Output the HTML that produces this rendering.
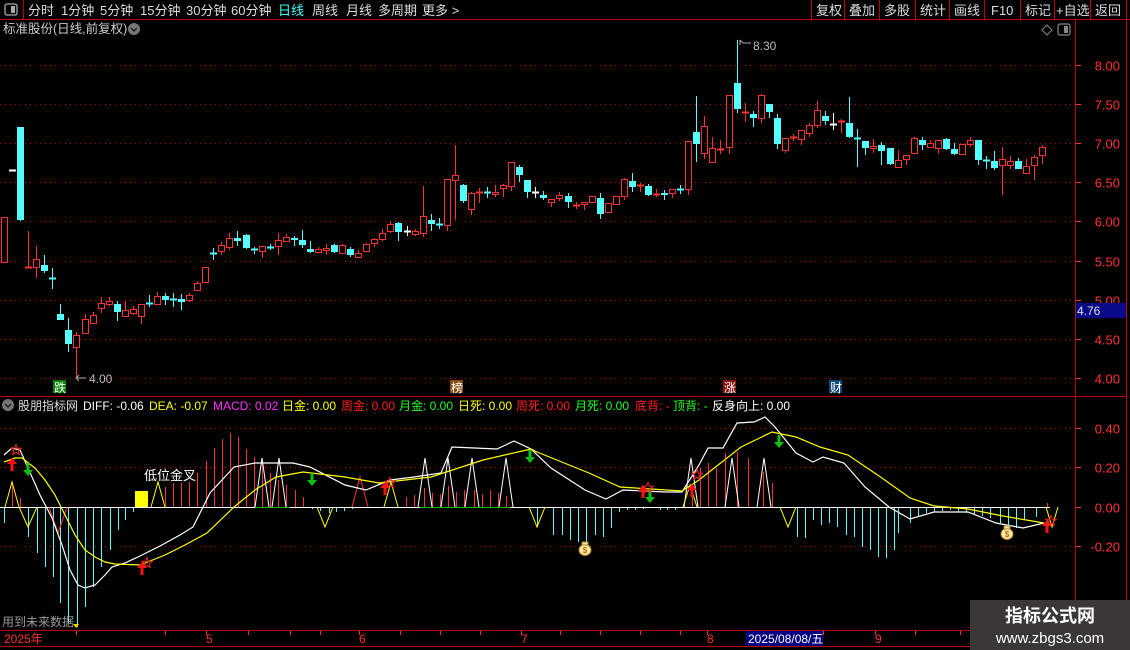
<!DOCTYPE html>
<html><head><meta charset="utf-8">
<style>
html,body{margin:0;padding:0;background:#000;}
body{width:1130px;height:650px;overflow:hidden;position:relative;font-family:"Liberation Sans","Noto Sans CJK SC",sans-serif;}
svg text{font-family:"Liberation Sans","Noto Sans CJK SC",sans-serif;}
</style></head>
<body>
<svg id="s" width="1130" height="650" viewBox="0 0 1130 650" xmlns="http://www.w3.org/2000/svg" style="position:absolute;left:0;top:0">
<rect width="1130" height="650" fill="#000"/>
<line x1="0" y1="19.5" x2="1130" y2="19.5" stroke="#c00000"/>
<line x1="23.5" y1="0" x2="23.5" y2="19" stroke="#c00000"/>
<rect x="5" y="4" width="12" height="11" rx="2" fill="none" stroke="#aaa" stroke-width="1.3"/>
<rect x="11" y="6" width="4" height="7" fill="#aaa"/>
<g font-size="13" fill="#ddd">
<text x="28" y="15">分时</text><text x="61" y="15">1分钟</text><text x="100" y="15">5分钟</text>
<text x="140" y="15">15分钟</text><text x="186" y="15">30分钟</text><text x="231" y="15">60分钟</text>
<text x="278" y="15" fill="#40ffff">日线</text><text x="312" y="15">周线</text><text x="346" y="15">月线</text>
<text x="378" y="15">多周期</text><text x="422" y="15">更多 &gt;</text>
<text x="816" y="15">复权</text><text x="849" y="15">叠加</text><text x="884" y="15">多股</text>
<text x="920" y="15">统计</text><text x="954" y="15">画线</text><text x="991" y="15">F10</text>
<text x="1025" y="15">标记</text><text x="1056" y="15">+自选</text><text x="1095" y="15">返回</text>
</g>
<g stroke="#c00000">
<line x1="811.5" y1="0" x2="811.5" y2="19"/><line x1="844.5" y1="0" x2="844.5" y2="19"/><line x1="879.5" y1="0" x2="879.5" y2="19"/>
<line x1="915.5" y1="0" x2="915.5" y2="19"/><line x1="949.5" y1="0" x2="949.5" y2="19"/><line x1="984.5" y1="0" x2="984.5" y2="19"/>
<line x1="1020.5" y1="0" x2="1020.5" y2="19"/><line x1="1054.5" y1="0" x2="1054.5" y2="19"/><line x1="1090.5" y1="0" x2="1090.5" y2="19"/>
<line x1="1126.5" y1="0" x2="1126.5" y2="650"/>
<line x1="1075.5" y1="20" x2="1075.5" y2="630"/>
<line x1="0" y1="396.5" x2="1126" y2="396.5"/>
<line x1="0" y1="630.5" x2="1130" y2="630.5"/>
<line x1="0" y1="646.5" x2="1130" y2="646.5"/>
</g>
<text x="3" y="33" font-size="12.5" fill="#ccc">标准股份(日线,前复权)</text>
<circle cx="134" cy="29" r="6" fill="#777"/><path d="M131 28 l3 3 l3 -3" stroke="#222" stroke-width="1.5" fill="none"/>
<path d="M1047 25 l5 5 l-5 5 l-5 -5z" fill="none" stroke="#888"/>
<rect x="1058" y="24" width="12" height="11" rx="2" fill="none" stroke="#888" stroke-width="1.2"/><rect x="1064" y="26" width="4" height="7" fill="#888"/>
<g id="grid" stroke="#b00000" stroke-dasharray="1,4"></g>
<g id="axis" font-size="13" fill="#ff3030" text-anchor="end"></g>
<rect x="1076" y="303" width="50" height="15" fill="#0a0a88"/>
<text x="1077" y="315" font-size="12" fill="#ddd">4.76</text>
<g id="candles" shape-rendering="crispEdges"></g>
<path d="M76 378 h10 M76 378 l3 -3 M76 378 l3 3" stroke="#aaa" fill="none"/>
<text x="89" y="383" font-size="12" fill="#bbb">4.00</text>
<path d="M740 40 v5 M740 40 l3 3 h8" stroke="#aaa" fill="none"/>
<text x="753" y="50" font-size="12" fill="#bbb">8.30</text>
<rect x="53" y="380" width="13" height="13" fill="#008000"/><text x="54" y="392" font-size="12" fill="#fff">跌</text>
<rect x="450" y="380" width="13" height="13" fill="#8a4a10"/><text x="451" y="392" font-size="12" fill="#fff">榜</text>
<rect x="723" y="380" width="13" height="13" fill="#8a1010"/><text x="724" y="392" font-size="12" fill="#fff">涨</text>
<rect x="829" y="380" width="13" height="13" fill="#104878"/><text x="830" y="392" font-size="12" fill="#fff">财</text>
<circle cx="8" cy="405" r="6" fill="#777"/><path d="M5 404 l3 3 l3 -3" stroke="#222" stroke-width="1.5" fill="none"/>
<g font-size="12">
<text x="18" y="410" fill="#ddd">股朋指标网</text>
<text x="83" y="410" fill="#fff">DIFF: -0.06</text>
<text x="149" y="410" fill="#ffff00">DEA: -0.07</text>
<text x="213" y="410" fill="#ff30ff">MACD: 0.02</text>
<text x="282" y="410" fill="#ffff00">日金: 0.00</text>
<text x="341" y="410" fill="#ff2020">周金: 0.00</text>
<text x="399" y="410" fill="#20ff20">月金: 0.00</text>
<text x="458" y="410" fill="#ffff00">日死: 0.00</text>
<text x="516" y="410" fill="#ff2020">周死: 0.00</text>
<text x="575" y="410" fill="#20ff20">月死: 0.00</text>
<text x="635" y="410" fill="#ff2020">底背: -</text>
<text x="673" y="410" fill="#20ff20">顶背: -</text>
<text x="712" y="410" fill="#fff">反身向上: 0.00</text>
</g>
<g id="ind"></g>
<rect x="135" y="491" width="13" height="16" fill="#ffff00"/>
<text x="144" y="480" font-size="13" fill="#fff">低位金叉</text>
<text x="2" y="626" font-size="12" fill="#999">用到未来数据</text>
<path d="M73 624 h6 l-3 4z" fill="#ffd000"/>
<g font-size="12" fill="#ff3030">
<text x="4" y="643">2025年</text><text x="206" y="643">5</text><text x="359" y="643">6</text>
<text x="521" y="643">7</text><text x="707" y="643">8</text><text x="875" y="643">9</text>
</g>
<g stroke="#ff3030" id="ticks"></g>
<rect x="746" y="631" width="77" height="15" fill="#000080"/>
<text x="748" y="643" font-size="12" fill="#fff">2025/08/08/五</text>
<rect x="970" y="600" width="160" height="50" fill="#3b3737"/>
<text x="1050" y="622" font-size="18" font-weight="bold" fill="#fff" text-anchor="middle">指标公式网</text>
<text x="1050" y="643" font-size="15" fill="#fff" text-anchor="middle">www.zbgs3.com</text>
</svg>
<script>
var NS="http://www.w3.org/2000/svg";
function el(p,t,a){var e=document.createElementNS(NS,t);for(var k in a)e.setAttribute(k,a[k]);p.appendChild(e);return e;}
var g=document.getElementById('grid'),ax=document.getElementById('axis');
var prices=["8.00","7.50","7.00","6.50","6.00","5.50","5.00","4.50","4.00"];
for(var i=0;i<9;i++){var y=Math.round(65+i*39.1)+0.5;el(g,'line',{x1:0,y1:y,x2:1075,y2:y});
 var t=el(ax,'text',{x:1120,y:y+5});t.textContent=prices[i];
 el(document.getElementById('s'),'line',{x1:1075,y1:y,x2:1081,y2:y,stroke:'#ff3030'});}
var iv=[[428.5,"0.40"],[467.5,"0.20"],[507.5,"0.00"],[546.5,"-0.20"]];
iv.forEach(function(v){if(v[0]!=507.5)el(g,'line',{x1:0,y1:v[0],x2:1075,y2:v[0]});var t=el(ax,'text',{x:1120,y:v[0]+5});t.textContent=v[1];
 el(document.getElementById('s'),'line',{x1:1075,y1:v[0],x2:1081,y2:v[0],stroke:'#ff3030'});});
var tk=document.getElementById('ticks');
[76,165,206,248,290,320,359,400,440,480,521,560,600,640,680,707,746,823,875,915,960,1000,1040].forEach(function(x){el(tk,'line',{x1:x+.5,y1:631,x2:x+.5,y2:635});});
var C=[[217,262,217,262,'r'],[170,170,170,170,'w'],[127,220,127,221,'c'],[267,267,231,267,'r'],[259,267,246,278,'r'],[265,271,255,273,'c'],[278,278,268,289,'c'],[314,320,304,320,'c'],[330,344,318,352,'c'],[335,347,332,377,'r'],[319,333,314,333,'r'],[315,323,312,323,'r'],[303,308,297,313,'r'],[301,304,297,306,'r'],[304,312,301,321,'c'],[310,316,301,316,'r'],[309,313,306,315,'r'],[304,316,304,324,'r'],[303,303,295,307,'c'],[296,304,292,304,'r'],[296,300,293,305,'c'],[299,299,293,307,'c'],[299,302,294,310,'c'],[295,300,293,302,'r'],[283,290,281,291,'r'],[267,282,267,282,'r'],[253,253,248,260,'c'],[245,251,242,255,'r'],[238,247,233,250,'r'],[238,241,231,246,'c'],[235,248,234,249,'c'],[249,249,247,254,'c'],[246,251,246,258,'r'],[247,247,244,250,'c'],[240,246,233,255,'r'],[237,241,234,242,'r'],[238,240,236,246,'c'],[240,245,230,248,'c'],[249,252,241,253,'c'],[249,252,247,253,'r'],[248,250,244,255,'r'],[245,252,244,253,'c'],[245,253,244,254,'r'],[249,255,247,257,'c'],[253,257,250,258,'r'],[244,251,243,252,'r'],[239,243,238,247,'r'],[233,239,229,241,'r'],[224,231,221,233,'r'],[223,232,222,241,'c'],[231,231,226,236,'w'],[231,234,229,236,'r'],[216,233,186,237,'r'],[220,224,214,231,'c'],[224,224,218,229,'c'],[179,225,179,231,'r'],[175,180,145,220,'r'],[185,201,184,203,'c'],[193,209,192,215,'r'],[192,192,188,203,'r'],[192,192,187,198,'c'],[192,194,185,197,'r'],[185,188,184,197,'r'],[162,186,162,191,'r'],[167,175,165,182,'c'],[180,192,180,198,'c'],[192,192,187,198,'w'],[195,198,191,200,'c'],[199,202,199,207,'r'],[195,198,192,201,'r'],[196,202,193,208,'c'],[205,205,202,209,'r'],[202,204,202,210,'r'],[196,202,196,203,'r'],[198,214,193,219,'c'],[203,212,203,213,'r'],[196,204,196,205,'r'],[179,196,178,200,'r'],[181,187,173,192,'c'],[185,185,183,192,'r'],[186,195,184,196,'c'],[194,194,189,197,'r'],[193,195,190,200,'c'],[189,193,189,198,'r'],[189,189,185,194,'c'],[141,189,141,195,'r'],[132,144,96,162,'c'],[126,153,116,159,'r'],[148,162,137,162,'r'],[149,149,140,154,'r'],[95,147,95,154,'r'],[83,109,40,113,'c'],[112,112,103,122,'r'],[114,118,111,127,'c'],[95,118,94,123,'r'],[104,112,104,118,'c'],[118,144,114,149,'c'],[138,150,138,153,'r'],[137,137,134,141,'r'],[130,139,130,145,'r'],[125,133,123,137,'r'],[110,125,101,128,'r'],[116,121,111,125,'c'],[124,124,113,130,'w'],[121,121,119,133,'r'],[123,137,97,138,'c'],[138,138,129,167,'c'],[141,148,141,155,'c'],[146,148,139,153,'r'],[145,151,142,165,'c'],[148,164,148,165,'c'],[160,167,150,167,'r'],[155,159,155,165,'r'],[138,153,137,153,'r'],[140,145,137,150,'c'],[143,147,140,148,'r'],[140,148,140,154,'r'],[139,149,138,150,'c'],[149,154,143,155,'c'],[144,154,144,154,'r'],[140,144,137,147,'r'],[140,160,140,165,'c'],[160,160,156,169,'c'],[161,168,151,170,'c'],[159,165,147,195,'r'],[161,165,156,169,'r'],[161,169,158,169,'c'],[166,173,159,173,'r'],[157,165,155,180,'r'],[147,155,145,164,'r']];
var cg=document.getElementById('candles');
C.forEach(function(c,i){var x=Math.round(4+i*8.05)+0.5;var col=c[4]=='r'?'#ff3232':(c[4]=='c'?'#54ffff':'#ffffff');
 var top=c[0],bot=c[1];
 if(bot-top<2){el(cg,'line',{x1:x,y1:c[2],x2:x,y2:c[3],stroke:col});el(cg,'rect',{x:x-3.5,y:top-0.5,width:7,height:2,fill:col});return;}
 if(c[4]=='r'){el(cg,'line',{x1:x,y1:c[2],x2:x,y2:top,stroke:col});el(cg,'line',{x1:x,y1:bot,x2:x,y2:c[3],stroke:col});
  el(cg,'rect',{x:x-3,y:top+0.5,width:6,height:bot-top,fill:'none',stroke:col});}
 else{el(cg,'line',{x1:x,y1:c[2],x2:x,y2:c[3],stroke:col});el(cg,'rect',{x:x-3.5,y:top,width:7,height:bot-top,fill:col});}
});
var ig=document.getElementById('ind');
var bg=el(ig,'g',{'shape-rendering':'crispEdges'});
var cy=[[4,523],[28,537],[37,553],[45,567],[53,577],[60,603],[68,623],[77,627],[85,607],[93,587],[101,567],[110,550],[118,530],[125,520],[133,512],[312,509],[320,511],[329,513],[336,512],[344,511],[352,509],[537,527],[553,535],[562,535],[570,540],[578,542],[586,542],[595,535],[603,537],[611,528],[619,512],[627,510],[635,510],[643,509],[660,510],[667,510],[675,510],[797,537],[805,538],[813,520],[821,525],[829,523],[837,527],[846,535],[854,537],[862,547],[870,550],[878,557],[886,558],[894,550],[898,533],[910,523],[918,517],[926,513],[934,512],[942,511],[950,510],[958,512],[966,513],[974,514],[982,516],[990,518],[1000,523],[1008,527],[1016,528],[1024,520],[1036,517]];
cy.forEach(function(b){el(bg,'line',{x1:b[0]+.5,y1:507,x2:b[0]+.5,y2:b[1],stroke:'#54ffff'});});
var rd=[[12,482],[20,498],[165,487],[173,483],[181,483],[189,482],[197,473],[206,461],[214,448],[222,439],[230,433],[238,437],[246,449],[254,457],[262,463],[270,473],[278,480],[286,485],[295,490],[303,497],[406,497],[414,495],[424,488],[432,493],[440,494],[448,486],[456,492],[464,490],[474,490],[482,494],[490,490],[498,493],[506,496],[692,492],[700,468],[708,463],[716,468],[725,453],[737,452],[748,458],[763,472],[772,483],[1047,503]];
rd.forEach(function(b){el(bg,'line',{x1:b[0]+.5,y1:507,x2:b[0]+.5,y2:b[1],stroke:'#ff3030'});});
el(bg,'line',{x1:0,y1:507.5,x2:1050,y2:507.5,stroke:'#fff'});
el(bg,'line',{x1:255,y1:507.5,x2:290,y2:507.5,stroke:'#00c000'});
el(bg,'line',{x1:420,y1:507.5,x2:510,y2:507.5,stroke:'#00c000'});
function tri(x,py,col,w){w=w||7;el(ig,'polyline',{points:(x-w)+',507 '+x+','+py+' '+(x+w)+',507',fill:'none',stroke:col});}
[262,279,425,448,472,506,691,732,764].forEach(function(x){tri(x,458,'#fff');});
tri(12,482,'#ffff00');tri(158,482,'#ffff00');tri(391,482,'#ffff00');tri(690,485,'#ffff00');
tri(28,527,'#ffff00',9);tri(325,527,'#ffff00',8);tri(537,527,'#ffff00',8);tri(788,527,'#ffff00',8);tri(1052,527,'#ffff00',6);
tri(58,533,'#ff3030',9);tri(360,477,'#ff3030',8);
var W="4,455 12,448 20,450 28,468 40,495 52,518 62,545 70,570 78,585 85,588 95,585 105,575 112,567 125,563 140,556 160,546 180,535 193,527 210,493 234,467 255,463 293,463 310,467 345,485 366,490 390,480 414,477 441,473 452,447 497,449 514,441 531,449 551,468 585,490 606,499 623,490 665,492 682,492 699,465 708,448 723,448 737,423 754,422 765,417 775,427 796,453 813,462 823,457 844,463 865,487 889,507 910,519 934,512 968,512 996,523 1023,528 1044,523";
var Y="4,462 15,458 22,458 35,468 45,480 55,495 65,515 75,535 85,550 95,557 105,562 115,564 140,565 150,561 165,555 185,545 207,533 234,507 255,490 276,477 303,472 345,477 379,483 431,477 483,460 531,449 537,452 589,473 620,487 682,491 699,480 741,447 772,432 796,437 820,447 848,455 882,478 910,498 934,506 968,509 1003,516 1044,523";
el(ig,'polyline',{points:W,fill:'none',stroke:'#fff','stroke-width':1.2});
el(ig,'polyline',{points:Y,fill:'none',stroke:'#ffff00','stroke-width':1.2});
function up(x,y){el(ig,'path',{d:'M'+x+' '+(y-8)+' l-5 6 h3.5 v7 h3 v-7 h3.5z',fill:'#ff1010'});}
function dn(x,y){el(ig,'path',{d:'M'+x+' '+(y+8)+' l-5 -6 h3.5 v-7 h3 v7 h3.5z',fill:'#10c010'});}
function star(x,y){var p='';for(var k=0;k<10;k++){var r=k%2?2.3:5.5,a=-Math.PI/2+k*Math.PI/5;p+=(x+r*Math.cos(a)).toFixed(1)+','+(y+r*Math.sin(a)).toFixed(1)+' ';}el(ig,'polygon',{points:p,fill:'none',stroke:'#ff2020'});}
[[12,466],[142,570],[385,490],[643,493],[692,492],[1047,528]].forEach(function(a){up(a[0],a[1]);});
[[28,468],[312,478],[530,455],[650,495],[779,440]].forEach(function(a){dn(a[0],a[1]);});
[[16,450],[147,563],[390,483],[697,475],[1051,521],[648,488]].forEach(function(a){star(a[0],a[1]);});
function bag(x,y){el(ig,'ellipse',{cx:x,cy:y+2,rx:6,ry:5.5,fill:'#ffe9a0',stroke:'#b08020'});el(ig,'rect',{x:x-3,y:y-6,width:6,height:3,fill:'#ffe9a0',stroke:'#b08020'});var t=el(ig,'text',{x:x,y:y+5,'font-size':8,fill:'#a04000','text-anchor':'middle'});t.textContent='$';}
bag(585,548);bag(1007,532);
</script>
</body></html>
